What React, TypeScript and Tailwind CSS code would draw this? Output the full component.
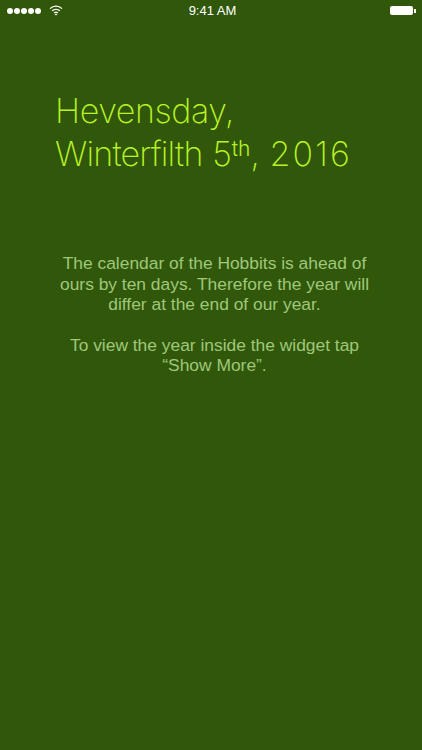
function StatusBar() {
  return (
    <div className="flex h-5 items-center justify-between pl-[7px] pr-[6px] pt-[1px] text-white">
      <div className="flex w-[140px] items-center gap-[8px]">
        <div className="flex gap-[1px]">
          <span className="size-[6px] rounded-full bg-white" />
          <span className="size-[6px] rounded-full bg-white" />
          <span className="size-[6px] rounded-full bg-white" />
          <span className="size-[6px] rounded-full bg-white" />
          <span className="size-[6px] rounded-full bg-white" />
        </div>
        <svg width="14" height="11" viewBox="0 0 14 11" fill="none" stroke="white" strokeWidth="1.3">
          <path d="M1 3.6C4.4 .4 9.6 .4 13 3.6" />
          <path d="M3.1 5.8C5.3 3.8 8.7 3.8 10.9 5.8" />
          <path d="M5.1 7.9C6.2 7 7.8 7 8.9 7.9" />
          <path d="M7 10.6L5.7 9.2C6.4 8.7 7.6 8.7 8.3 9.2Z" fill="white" stroke="none" />
        </svg>
      </div>
      <span className="font-['Liberation_Sans',sans-serif] text-[13px] font-normal leading-5">9:41 AM</span>
      <div className="flex w-[138px] items-center justify-end">
        <div className="h-[9px] w-[23px] rounded-[2px] bg-white" />
        <div className="ml-[1px] h-[4px] w-[1.5px] bg-white" />
      </div>
    </div>
  );
}

export default function App() {
  return (
    <div className="flex h-[750px] w-[422px] flex-col overflow-hidden bg-[#31570b]">
      <StatusBar />
      <h1 className="mt-[69px] pl-[55px] font-['Inter',sans-serif] text-[34px] font-extralight leading-[43px] text-[#b9f325]">
        <span className="tracking-[-0.4px]">Hevensday,</span>
        <br />
        <span className="tracking-[-0.8px]">Winterfilth</span> 5
        <sup className="text-[21px] font-light leading-none">th</sup>, <span className="tracking-[2px]">2016</span>
      </h1>
      <div className="mt-[78px] pl-[53px] pr-[46px] text-center font-['Liberation_Sans',sans-serif] text-[17.4px] leading-[20.5px] text-[#9fc878]">
        <p>
          The calendar of the Hobbits is ahead of
          <br />
          ours by ten days. Therefore the year will
          <br />
          differ at the end of our year.
        </p>
        <p className="mt-[20px]">
          To view the year inside the widget tap
          <br />
          “Show More”.
        </p>
      </div>
    </div>
  );
}
